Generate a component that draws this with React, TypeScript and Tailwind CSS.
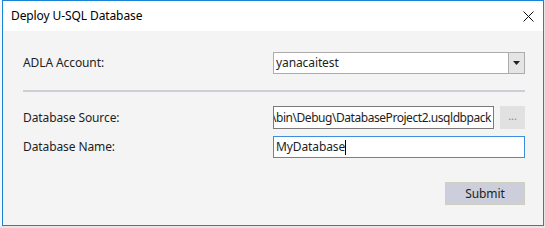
export default function App() {
  return (
    <div
      className="w-[545px] h-[228px] bg-[#e6e6e6] overflow-hidden text-[12px] text-[#1e1e1e] tracking-[-0.1px]"
      style={{ fontFamily: '"Noto Sans", "Open Sans", sans-serif' }}
    >
      <div className="flex h-[226px]">
        <div className="w-[2px] bg-[#f7f7f7]" />
        <div className="w-[542px] h-[226px] border border-[#1883d7] flex flex-col bg-[#f4f4f4]">
          {/* Title bar */}
          <div className="h-[30px] bg-white flex items-center justify-between pl-[8px] pr-[9px] shrink-0">
            <span className="text-[12px] text-black">Deploy U-SQL Database</span>
            <svg width="11" height="11" viewBox="0 0 11 11">
              <path d="M0.5 0.5 L10.5 10.5 M10.5 0.5 L0.5 10.5" stroke="#111" strokeWidth="1" />
            </svg>
          </div>

          {/* Content */}
          <div className="flex-1 flex flex-col pl-[20px] pr-[18px] pt-[21px]">
            <div className="flex items-center h-[22px]">
              <span className="w-[250px]">ADLA Account:</span>
              <div className="flex-1 h-[22px] bg-white border border-[#acacac] flex">
                <div className="flex-1 flex items-center pl-[2px]">yanacaitest</div>
                <div className="w-[16px] bg-[#e5e5e5] border-l border-[#acacac] flex items-center justify-center">
                  <svg width="7" height="4" viewBox="0 0 7 4">
                    <path d="M0 0 H7 L3.5 4 Z" fill="#222" />
                  </svg>
                </div>
              </div>
            </div>

            <div className="h-[2px] bg-[#cdced6] mt-[16px]" />

            <div className="flex items-center h-[23px] mt-[14px]">
              <span className="w-[250px]">Database Source:</span>
              <div className="w-[221px] h-[23px] bg-white border border-[#7a7a7a] overflow-hidden flex items-center justify-end pr-[2px] whitespace-nowrap tracking-[-0.45px]">
                <span className="shrink-0">..\bin\Debug\DatabaseProject2.usqldbpack</span>
              </div>
              <div className="ml-[6px] flex-1 h-[23px] bg-[#e1e1e1] flex items-center justify-center text-[#888] text-[11px] pb-[2px]">
                ...
              </div>
            </div>

            <div className="flex items-center h-[22px] mt-[7px]">
              <span className="w-[250px]">Database Name:</span>
              <div className="flex-1 h-[22px] bg-white border border-[#3c8ee0] flex items-center pl-[2px]">
                <span>MyDatabase</span>
                <span className="w-[1px] h-[15px] bg-black" />
              </div>
            </div>

            <div className="flex justify-end mt-[24px]">
              <div className="w-[80px] h-[23px] bg-[#cccedb] border border-[#cfcfbf] flex items-center justify-center">
                Submit
              </div>
            </div>
          </div>
        </div>
      </div>
    </div>
  );
}
